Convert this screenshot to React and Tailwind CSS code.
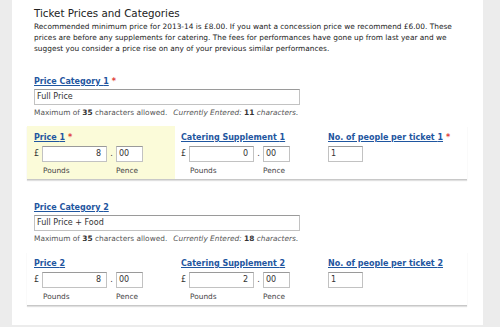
import React from "react";

const font = { fontFamily: '"DejaVu Sans", Verdana, sans-serif' };

function Label({ children, required }) {
  return (
    <div className="h-[12px] leading-[12px] text-[8px] font-bold">
      <span className="text-[#1f56a0] underline decoration-[#1f56a0]">{children}</span>
      {required && <span className="text-[#e0403a] ml-[3px]">*</span>}
    </div>
  );
}

function Box({ value, className = "", right }) {
  return (
    <div
      className={
        "h-[16px] border border-[#c2c2c2] border-t-[#9a9a9a] bg-white text-[8px] leading-[14px] text-[#333] px-[2px] " +
        (right ? "text-right " : "") +
        className
      }
    >
      {value}
    </div>
  );
}

function Money({ pounds, pence }) {
  return (
    <div>
      <div className="flex items-center mt-[2px] text-[8px] text-[#333]">
        <span className="w-[8px]">£</span>
        <Box value={pounds} right className="w-[65px] pr-[5px]" />
        <span className="w-[9px] text-center">.</span>
        <Box value={pence} className="w-[27px]" />
      </div>
      <div className="flex text-[7.4px] text-[#444] mt-[4px] leading-[10px]">
        <span className="ml-[9px] w-[73px]">Pounds</span>
        <span>Pence</span>
      </div>
    </div>
  );
}

function PriceRow({ n, price, catering, req, highlight }) {
  return (
    <div className="flex ml-[15px] w-[440px] h-[54px] border-b border-[#c8c8c8] shadow-[0_1px_1px_rgba(0,0,0,0.12)]">
      <div className={"w-[148px] pl-[7px] pt-[6px] " + (highlight ? "bg-[#fbfbd9]" : "")}>
        <Label required={req}>Price {n}</Label>
        <Money pounds={price} pence="00" />
      </div>
      <div className="w-[153px] pl-[6px] pt-[6px]">
        <Label>Catering Supplement {n}</Label>
        <Money pounds={catering} pence="00" />
      </div>
      <div className="pt-[6px]">
        <Label required={req}>No. of people per ticket {n}</Label>
        <Box value="1" className="w-[35px] mt-[2px]" />
      </div>
    </div>
  );
}

function Category({ n, value, count, req }) {
  return (
    <div className="pl-[22px]">
      <Label required={req}>Price Category {n}</Label>
      <Box value={value} className="w-[266px] mt-[1px] border-t-[#8a8a8a]" />
      <div className="text-[7.4px] text-[#555] mt-[3px] leading-[10px]">
        Maximum of <b className="text-[#333]">35</b> characters allowed.
        <span className="ml-[6px] italic">Currently Entered: </span>
        <b className="text-[#333]">{count}</b> <span className="italic">characters.</span>
      </div>
    </div>
  );
}

export default function App() {
  return (
    <div className="w-[500px] h-[327px] bg-[#ececec] flex overflow-hidden" style={font}>
      <div className="w-[12px] shrink-0" />
      <div className="w-[471px] h-[325px] bg-white shrink-0">
        {/* Header */}
        <div className="pl-[22px] pt-[6px] pr-[14px]">
          <h1 className="text-[10.3px] leading-[14px] text-[#222]">Ticket Prices and Categories</h1>
          <p className="text-[7.4px] leading-[11px] text-[#222] mt-[1px]">
            Recommended minimum price for 2013-14 is £8.00. If you want a concession price we recommend £6.00. These
            prices are before any supplements for catering. The fees for performances have gone up from last year and we
            suggest you consider a price rise on any of your previous similar performances.
          </p>
        </div>

        <div className="mt-[22px]">
          <Category n={1} value="Full Price" count={11} req />
        </div>
        <div className="mt-[8px]">
          <PriceRow n={1} price="8" catering="0" req highlight />
        </div>

        <div className="mt-[22px]">
          <Category n={2} value="Full Price + Food" count={18} />
        </div>
        <div className="mt-[8px]">
          <PriceRow n={2} price="8" catering="2" />
        </div>
      </div>
    </div>
  );
}
